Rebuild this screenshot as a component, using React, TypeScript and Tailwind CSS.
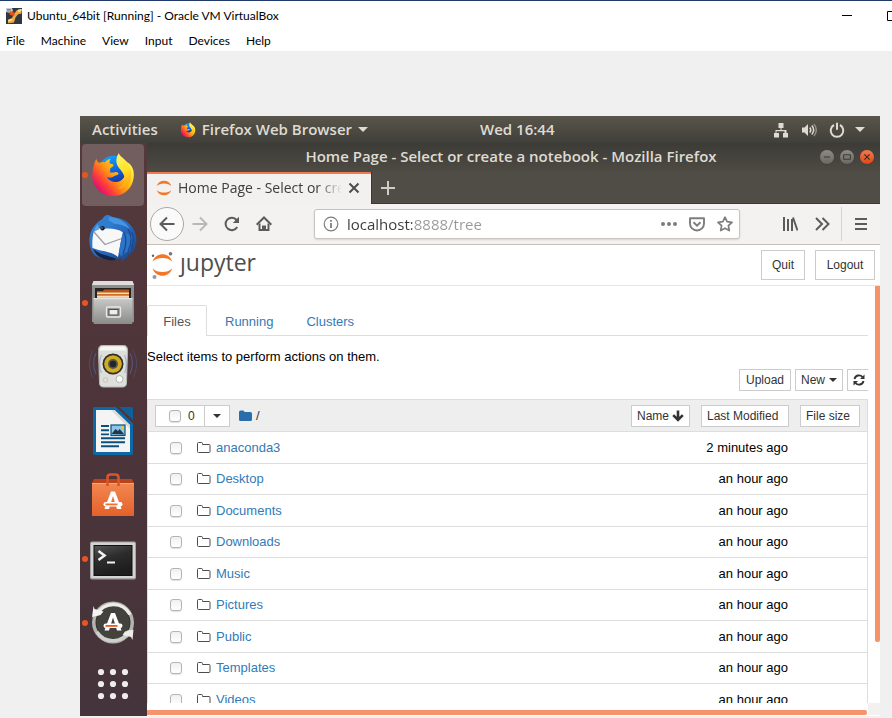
import { useId, useState } from "react";
import type { ReactNode } from "react";

const UI = "font-['Open_Sans','Noto_Sans',sans-serif]";
const HOST = "font-['Lato','Open_Sans',sans-serif] text-xs text-black";
const BTN =
  "flex items-center border border-[#ccc] bg-white text-xs text-[#333] whitespace-nowrap";
const CHECK =
  "block size-3 shrink-0 appearance-none rounded-[3px] border border-[#b4b4b4] bg-linear-to-b from-[#f0f0f0] to-white shadow-[0_1px_1px_rgba(0,0,0,0.12)] checked:bg-[#f07746]";

const files = [
  ["anaconda3", "2 minutes ago"],
  ["Desktop", "an hour ago"],
  ["Documents", "an hour ago"],
  ["Downloads", "an hour ago"],
  ["Music", "an hour ago"],
  ["Pictures", "an hour ago"],
  ["Public", "an hour ago"],
  ["Templates", "an hour ago"],
  ["Videos", "an hour ago"],
];

/* ---------- application icons ---------- */

function VirtualBoxIcon() {
  return (
    <svg viewBox="0 0 16 16" className="size-4 shrink-0">
      <rect width="16" height="16" fill="#2f3742" />
      <path d="M0 0h6l1 3-3 2-4-1z" fill="#c9ccd2" />
      <path d="M1 1.500h4M1 3h4" stroke="#5a6270" strokeWidth=".7" />
      <path d="M8 6l3-4 4.500-1v4.500l-3.500.8-2.500 3.200L8 14.500l-6 .8v-3.500l4-1.800z" fill="#f3a83c" />
      <path d="M3 4.500l3.500-1.500 2.500 2.500L8 8 4 7z" fill="#e8521c" />
      <path d="M12 1.700l3.500-.7v2l-3 1zM2 12l3.500-1 1.500 1-4.500 1.500z" fill="#fde29a" />
    </svg>
  );
}

function FirefoxIcon({ className }: { className: string }) {
  const id = useId();
  return (
    <svg viewBox="0 0 48 48" className={className}>
      <defs>
        <linearGradient id={id + "a"} x1="0.85" y1="0.15" x2="0.1" y2="0.75">
          <stop offset="0" stopColor="#fff04a" />
          <stop offset="0.3" stopColor="#ffc21a" />
          <stop offset="0.55" stopColor="#ff8a16" />
          <stop offset="0.8" stopColor="#ff3b3c" />
          <stop offset="1" stopColor="#e0146e" />
        </linearGradient>
        <linearGradient id={id + "b"} x1="0.3" y1="0" x2="0.6" y2="1">
          <stop offset="0" stopColor="#19a2fa" />
          <stop offset="0.5" stopColor="#0a62dd" />
          <stop offset="1" stopColor="#261d80" />
        </linearGradient>
        <linearGradient id={id + "c"} x1="0.4" y1="0" x2="0.6" y2="1">
          <stop offset="0" stopColor="#fff36a" />
          <stop offset="0.5" stopColor="#ffe226" />
          <stop offset="1" stopColor="#ff9f10" />
        </linearGradient>
      </defs>
      <circle cx="25" cy="21" r="17" fill={`url(#${id}b)`} />
      <path
        d="M6.500 7c.5 2 1.500 3.500 3 4.500 2-1 4-1.300 6-.8 1.500-2 3.500-3 6-3.300-1.300 1.600-1.500 3.500-.8 4.600 1.300.5 3.300.5 3.800 1.500.2 1.500-2.500 2.500-3.500 4 0 1.500.2 2.500-.5 3.500 2 .5 3.500.5 5.500 0 2.500-.5 4.500 1 3.500 2.300-1.500 1.200-3.500 1.200-5 2.200-2 1.500-5 1.500-7 .5 2.500 4 7 6 11.500 5 5.500-1.200 8.500-6 8-12-.3-4-3.500-8.500-4.500-12L41 12c4 4 5.500 9 4.500 15.500C44 38.500 35 46 24.500 46 12 46 2.500 36.500 2.500 25 2.500 18 4 12 6.500 7z"
        fill={`url(#${id}a)`}
      />
      <path
        d="M30 1c.5 3 5 5 8.500 9.500 5 6.500 6 14 2.500 21-3 5.500-8 7-12 6.500 7-2.500 9-8.500 6-14.500C32.500 18 28 16 27.500 10 27.300 6.500 28.500 3.500 30 1z"
        fill={`url(#${id}c)`}
      />
    </svg>
  );
}

function ThunderbirdIcon() {
  const id = useId();
  return (
    <svg viewBox="0 0 48 48" className="size-12">
      <defs>
        <linearGradient id={id} x1="0" y1="0" x2="1" y2="1">
          <stop offset="0" stopColor="#3a8ada" />
          <stop offset="0.5" stopColor="#2a6cc0" />
          <stop offset="1" stopColor="#173f80" />
        </linearGradient>
      </defs>
      <path d="M18 0c3 0 5 2 8 2.500 12 1 21 10 21.500 22.500-.3 8-4.500 13-7.500 16l1-4c-2 4-5 8-9 9.500l1-4-7 2.500C14 44 7 43 4 38 1 34 0 29 .5 23c1-9 6-15 13-19 1-2 2.500-3.500 4.500-4z" fill={`url(#${id})`} />
      <path d="M20 2c9 0 17 5 21 12-7-5-15-6-22-5z" fill="#4596e0" />
      <path d="M4 33c4 6 16 8 24 11l-4 1.500C14 45 6 41 4 33z" fill="#14254a" />
      <path d="M5 16c3-1 5-1.500 6-3l8 .5c6 0 11 1 15 4-2 6-3 14-5 24.500C22 36 12 36.500 3.500 33 3 28 3.500 21 5 16z" fill="#f8f8f9" />
      <path d="M5 17l11 12.500L34 23" fill="none" stroke="#9a9ea6" strokeWidth="1.300" />
      <path d="M34 17c-2 8-3 14-4 21l2 3 9-6 3-14z" fill="#2c74c8" />
      <path d="M39 14c4 6 4 14 0 22M35 17c3 7 2 15-1 22M43 17c2 5 1.500 12-1 17" stroke="#1a4992" strokeWidth="1.300" fill="none" />
      <path d="M9 8c4-4 12-4 16 1-3 3-8 5-13 5z" fill="#2f7dce" />
      <circle cx="13.500" cy="13.300" r="2.200" fill="#14213d" />
      <circle cx="13" cy="13" r=".7" fill="#c8963c" />
      <path d="M9 9c-2 2-4 5-4 8l5-3z" fill="#58a4e4" />
    </svg>
  );
}

function DrawerIcon() {
  const id = useId();
  return (
    <svg viewBox="0 0 48 48" className="size-12">
      <defs>
        <linearGradient id={id} x1="0" y1="0" x2="0" y2="1">
          <stop offset="0" stopColor="#c9c9c7" />
          <stop offset="1" stopColor="#8b8b89" />
        </linearGradient>
      </defs>
      <path d="M4.500 2h39l1.500 4v37H3V6z" fill="#8f8f8d" />
      <path d="M4.500 2h39L45 6H3z" fill="#dededc" />
      <rect x="6" y="9" width="36" height="13" fill="#272322" />
      <path d="M8 12h6l1-1.500h25V20H8z" fill="#b5561c" />
      <path d="M8 13.500h32V15H8z" fill="#ffd9a6" />
      <path d="M8 15.500h32V20H8z" fill="#e8863b" />
      <path d="M8 17.200h32v1.400H8z" fill="#fff2dc" />
      <rect x="4.500" y="19" width="39" height="26" rx="1" fill={`url(#${id})`} />
      <path d="M4.500 19.700h39" stroke="#e9e9e7" />
      <rect x="17.500" y="28" width="14" height="10" rx="1" fill="#9a9a98" stroke="#e9e9e7" strokeWidth="1.300" />
      <rect x="20" y="30.500" width="9" height="5.500" fill="#eceeea" stroke="#4b4b49" />
    </svg>
  );
}

function RhythmboxIcon() {
  return (
    <svg viewBox="0 0 48 48" className="size-12">
      <g fill="none" stroke="#5570a5" strokeWidth="1.100">
        <path d="M7 10c-3 6-3 14 0 21M41 10c3 6 3 14 0 21" opacity=".6" />
        <path d="M4 7.500c-5 8-4.500 19 0 27M44 7.500c5 8 4.500 19 0 27" opacity=".35" />
      </g>
      <path d="M13.500 2.500h21c3 0 4 2 4 5L37.500 40c-.2 3-1.500 4-4 4h-19c-2.500 0-3.800-1-4-4L9.500 7.500c0-3 1-5 4-5z" fill="#dededb" stroke="#b9b9b5" />
      <path d="M14 3.500h20c2 0 3 1.500 3 4H11c0-2.500 1-4 3-4z" fill="#f6f6f4" />
      <g fill="none" stroke="#7f97c8" strokeWidth="1.100" opacity=".6">
        <path d="M12.500 12c-2.500 5-2.500 13 0 18M35.500 12c2.500 5 2.500 13 0 18" />
      </g>
      <circle cx="24" cy="21" r="10.500" fill="#55523e" />
      <circle cx="24" cy="21" r="8.800" fill="#d0ac22" />
      <circle cx="24" cy="21" r="5" fill="#5b5648" />
      <circle cx="24" cy="21" r="3.200" fill="#22252c" />
      <circle cx="24" cy="21" r="9.700" fill="none" stroke="#2f2e2b" strokeWidth="1.200" />
      <circle cx="16.500" cy="37" r="2.300" fill="none" stroke="#c5c5c1" />
      <circle cx="30.500" cy="36" r="3.500" fill="#fbfbfa" stroke="#b5b5b1" />
    </svg>
  );
}

function WriterIcon() {
  return (
    <svg viewBox="0 0 48 48" className="size-12">
      <path d="M30 0h12c1.500 0 2 .5 2 2v11z" fill="#0f5f9a" />
      <path d="M6 0h21l17 16.500V46c0 1.500-.8 2-2 2H6c-1.500 0-2-.8-2-2V2c0-1.500.8-2 2-2z" fill="#0b6aa5" />
      <path d="M7 3h18.500L41 18v27H7z" fill="#f4f4f4" />
      <path d="M25.500 3L41 18v4L22 3z" fill="#dadada" />
      <g stroke="#0b4f7d" strokeWidth="1.900">
        <path d="M12 19h8M12 23.200h8M12 27.400h8M12 31.200h24M12 35.200h24M12 39.200h18" />
      </g>
      <rect x="22" y="18" width="14" height="10.500" fill="#8dc6ea" stroke="#0b4f7d" strokeWidth="1.200" />
      <path d="M22.500 27l4-5 2.500 2 1.500-2 5 5.500z" fill="#1d3a4a" />
      <circle cx="33.300" cy="20.500" r="1.500" fill="#e8c63c" />
    </svg>
  );
}

function StoreLetter({ bar }: { bar: string }) {
  return (
    <g>
      <path d="M22 18h4l5.500 14.500 1 3h-4.500L24 22.500 20 35.500h-4.500l1-3z" fill="#fff" />
      <rect x="14.500" y="28.500" width="19" height="4.500" rx="2.200" fill="#fff" />
      <rect x="16.500" y="30" width="12" height="1.800" fill={bar} />
    </g>
  );
}

function SoftwareIcon() {
  const id = useId();
  return (
    <svg viewBox="0 0 48 48" className="size-12">
      <defs>
        <linearGradient id={id} x1="0" y1="0" x2="0" y2="1">
          <stop offset="0" stopColor="#f28751" />
          <stop offset="1" stopColor="#e4612a" />
        </linearGradient>
      </defs>
      <path d="M5 8h38l2 4H3z" fill="#b8441c" />
      <path d="M3 12h42v33H3z" fill={`url(#${id})`} />
      <path d="M3 12.500h42" stroke="#f7a77d" />
      <path d="M18.500 15V6.500c0-2 .8-3 3-3h5c2.200 0 3 1 3 3V15" fill="none" stroke="#d9562a" strokeWidth="2.600" />
      <g transform="translate(0 2.500)">
        <StoreLetter bar="#ec7038" />
      </g>
    </svg>
  );
}

function TerminalIcon() {
  const id = useId();
  return (
    <svg viewBox="0 0 48 48" className="size-12">
      <defs>
        <linearGradient id={id} x1="0" y1="0" x2="0.4" y2="1">
          <stop offset="0" stopColor="#565656" />
          <stop offset="0.5" stopColor="#2c2c2c" />
          <stop offset="1" stopColor="#1d1d1d" />
        </linearGradient>
      </defs>
      <rect x="1" y="6.500" width="46" height="38" rx="2" fill="#a4a4a2" />
      <rect x="2" y="7.500" width="44" height="35.500" rx="1" fill="#d3d3d1" />
      <rect x="5" y="10.500" width="38" height="30" fill={`url(#${id})`} stroke="#111" />
      <path d="M9.500 16l6 4.500-6 4.500" fill="none" stroke="#f2f2f2" strokeWidth="2.600" />
      <path d="M18 27.500h8" stroke="#f2f2f2" strokeWidth="2" />
    </svg>
  );
}

function UpdaterIcon() {
  return (
    <svg viewBox="0 0 48 48" className="size-12">
      <circle cx="24" cy="23.500" r="21" fill="#b3b3b0" />
      <circle cx="24" cy="23.500" r="17" fill="#43423d" stroke="#2e2d2a" />
      <path d="M7.500 16A18.800 18.800 0 0 1 41 15.500" fill="none" stroke="#ecece9" strokeWidth="3.400" />
      <path d="M40.500 31.500A18.800 18.800 0 0 1 8 33" fill="none" stroke="#cfcfcc" strokeWidth="3.400" />
      <path d="M4.500 7l1 3 9 2.500-3 3.500-8.500 2z" fill="#f3f3f1" />
      <path d="M43.500 41l-1.500-3-8.500-2 2.500-3.500 8.500-2z" fill="#ecece9" />
      <g transform="translate(0 -4)">
        <StoreLetter bar="#f0561d" />
      </g>
    </svg>
  );
}

function AppsGridIcon() {
  return (
    <svg viewBox="0 0 48 48" className="size-12" fill="#efedec">
      {[12, 24, 36].map((x) =>
        [9, 21, 33].map((y) => <circle key={x + "-" + y} cx={x} cy={y} r="3.100" />),
      )}
    </svg>
  );
}

/* ---------- small glyphs ---------- */

function Glyph({
  children,
  className = "size-4",
  box = "0 0 16 16",
  width = 2,
}: {
  children: ReactNode;
  className?: string;
  box?: string;
  width?: number;
}) {
  return (
    <svg
      viewBox={box}
      className={"shrink-0 " + className}
      fill="none"
      stroke="currentColor"
      strokeWidth={width}
    >
      {children}
    </svg>
  );
}

function Caret({ className }: { className: string }) {
  return (
    <svg viewBox="0 0 8 4" className={"shrink-0 " + className} fill="currentColor">
      <path d="M0 0h8L4 4z" />
    </svg>
  );
}

function Swooshes({ className }: { className: string }) {
  return (
    <svg viewBox="0 0 16 16" className={className} fill="#f37726">
      <path d="M.5 6C2 2.500 4.700 .8 8 .8S14 2.500 15.500 6C13.500 4.200 11 3.400 8 3.400S2.500 4.200.5 6z" />
      <path d="M.5 10c1.500 3.500 4.200 5.200 7.500 5.200s6-1.700 7.500-5.200c-2 1.800-4.500 2.600-7.500 2.600S2.500 11.800.5 10z" />
    </svg>
  );
}

function JupyterMark() {
  return (
    <svg viewBox="0 0 23 28" className="h-7 w-[23px] shrink-0">
      <path d="M1.500 10.500C3.500 5.500 7.300 3.300 11.500 3.300s8 2.200 9.700 7.200C18.500 8 15.300 7 11.500 7S4.200 8 1.500 10.500z" fill="#f37726" />
      <path d="M1.500 17.500c2 5 5.800 7.300 10 7.300s8-2.300 9.700-7.300C18.500 20 15.300 21 11.500 21S4.200 20 1.500 17.500z" fill="#f37726" />
      <circle cx="19.500" cy="2.700" r="1.800" fill="#767677" />
      <circle cx="2" cy="4.800" r="1.200" fill="#616262" />
      <circle cx="3.500" cy="26" r="2" fill="#989798" />
    </svg>
  );
}

/* ---------- desktop parts ---------- */

function DockItem({
  label,
  running,
  active,
  children,
}: {
  label: string;
  running?: boolean;
  active?: boolean;
  children: ReactNode;
}) {
  return (
    <button
      aria-label={label}
      className={
        "relative flex h-[62px] w-[62px] shrink-0 items-center justify-center rounded-sm " +
        (active ? "bg-[#725d5f]" : "")
      }
    >
      {running && (
        <span className="absolute top-1/2 left-0 size-1.5 -translate-y-1/2 rounded-full bg-[#e95420]" />
      )}
      {children}
    </button>
  );
}

function Dock() {
  return (
    <nav
      aria-label="Dock"
      className="flex w-[67px] shrink-0 flex-col gap-0.5 overflow-hidden bg-linear-to-b from-[#54393b] via-[#4c343a] to-[#45343b] pt-px pl-0.5"
    >
      <DockItem label="Firefox" running active>
        <FirefoxIcon className="size-[46px]" />
      </DockItem>
      <DockItem label="Thunderbird"><ThunderbirdIcon /></DockItem>
      <DockItem label="Files" running><DrawerIcon /></DockItem>
      <DockItem label="Rhythmbox"><RhythmboxIcon /></DockItem>
      <DockItem label="LibreOffice Writer"><WriterIcon /></DockItem>
      <DockItem label="Ubuntu Software"><SoftwareIcon /></DockItem>
      <DockItem label="Terminal" running><TerminalIcon /></DockItem>
      <DockItem label="Software Updater" running><UpdaterIcon /></DockItem>
      <DockItem label="Show Applications"><AppsGridIcon /></DockItem>
    </nav>
  );
}

function TopBar() {
  return (
    <div className="flex h-[27px] shrink-0 items-center bg-linear-to-b from-[#59554b] to-[#403f3a] text-[15px] font-semibold text-[#dfdbd2]">
      <div className="flex w-1/2 items-center pl-3">
        <button>Activities</button>
        <button className="ml-[22px] flex items-center gap-1.5">
          <FirefoxIcon className="size-4" />
          Firefox Web Browser
          <Caret className="h-[5px] w-2.5" />
        </button>
      </div>
      <button>Wed 16:44</button>
      <button aria-label="System menu" className="mr-[15px] ml-auto flex items-center">
        <svg viewBox="0 0 16 16" className="size-4" fill="currentColor">
          <path d="M5.500 1h5v5h-2v2h5v3h1.500v4.500h-5V11h1.500V9.200h-8V11H6v4.500H1V11h1.500V8h5V6h-2z" />
        </svg>
        <svg viewBox="0 0 16 16" className="ml-3 size-4" fill="currentColor">
          <path d="M1 5.500h2.500L7 2v12l-3.500-3.500H1z" />
          <g fill="none" stroke="currentColor" strokeWidth="1.500">
            <path d="M8.800 5.500c1.200 1.500 1.200 3.500 0 5" />
            <path d="M10.800 3.500c2.300 2.700 2.300 6.300 0 9" />
            <path d="M12.800 2c3.300 3.500 3.300 8.500 0 12" opacity=".45" />
          </g>
        </svg>
        <Glyph className="ml-3 size-4">
          <path d="M5 3A6.300 6.300 0 1 0 11 3M8 .8v7" />
        </Glyph>
        <Caret className="ml-2.5 h-[5px] w-2.5" />
      </button>
    </div>
  );
}

function WindowTitle() {
  const round =
    "flex size-4 items-center justify-center rounded-full border border-[#44423d] bg-linear-to-b from-[#8d8b84] to-[#6a6861] text-[#3a3935]";
  return (
    <div className="grid h-[29px] shrink-0 grid-cols-[1fr_auto_1fr] items-center bg-linear-to-b from-[#3c3b37] to-[#4e4b44] pr-[5px] pb-0.5 text-[15px] font-semibold text-[#dfdbd2]">
      <span />
      <h1 className="whitespace-nowrap">Home Page - Select or create a notebook - Mozilla Firefox</h1>
      <div className="flex justify-end gap-1">
        <button aria-label="Minimize" className={round}>
          <Glyph className="size-3" width={1.300}><path d="M4 8h8" /></Glyph>
        </button>
        <button aria-label="Maximize" className={round}>
          <Glyph className="size-3" width={1.300}><path d="M3.500 5h9v6h-9z" /></Glyph>
        </button>
        <button
          aria-label="Close"
          className="flex size-4 items-center justify-center rounded-full border border-[#44423d] bg-linear-to-b from-[#f5784c] to-[#dd4814] text-[#3a2a20]"
        >
          <Glyph className="size-3" width={1.500}><path d="M4.500 4.500l7 7M11.500 4.500l-7 7" /></Glyph>
        </button>
      </div>
    </div>
  );
}

function TabStrip() {
  return (
    <div className="flex h-8 shrink-0 items-stretch bg-[#504d46]">
      <div className="flex w-56 items-center border-t-2 border-[#f27a4f] bg-[#f2f1f0] pb-0.5 pl-[9px]">
        <Swooshes className="size-4 shrink-0" />
        <span className="ml-1.5 w-[164px] overflow-hidden mask-r-from-85% mask-r-to-100% text-sm whitespace-nowrap text-[#3d3d3d]">
          Home Page - Select or create a notebook
        </span>
        <button aria-label="Close tab" className="ml-1.5 text-[#4c4c4c]">
          <Glyph className="size-3" box="0 0 12 12"><path d="M1.500 1.500l9 9M10.500 1.500l-9 9" /></Glyph>
        </button>
      </div>
      <button
        aria-label="New tab"
        className="flex flex-1 items-center border-b border-l border-[#3a3833] pl-[9px] text-[#d0ccc4]"
      >
        <Glyph className="size-3.5" box="0 0 14 14"><path d="M7 0v14M0 7h14" /></Glyph>
      </button>
    </div>
  );
}

function NavBar() {
  const [url, setUrl] = useState("localhost:8888/tree");
  return (
    <div className="flex h-[41px] shrink-0 items-center border-b border-[#c6bfb8] bg-[#f3f2f1] pl-[3px] text-[#5b5b5b]">
      <button
        aria-label="Back"
        className="flex size-[34px] items-center justify-center rounded-full border border-[#aaa8a5] bg-[#fbfafa]"
      >
        <Glyph><path d="M15.500 8H1.500M8 1.500L1.500 8 8 14.500" /></Glyph>
      </button>
      <button aria-label="Forward" className="ml-2 text-[#b9b8b6]">
        <Glyph><path d="M.5 8h14M8 1.500L14.500 8 8 14.500" /></Glyph>
      </button>
      <button aria-label="Reload" className="ml-4">
        <Glyph>
          <path d="M13.200 11A6.200 6.200 0 1 1 12.600 4" />
          <path d="M15 .8V7H8.800z" fill="currentColor" stroke="none" />
        </Glyph>
      </button>
      <button aria-label="Home" className="ml-4">
        <Glyph>
          <path d="M.7 8.800L8 1.500l7.300 7.300" />
          <path d="M3.500 7.500V14h9V7.500" />
          <path d="M7 14v-3.500h2V14" />
        </Glyph>
      </button>
      <div className="ml-[42px] flex h-[30px] flex-1 items-center rounded-[3px] border border-[#c8c3be] bg-white pr-1.5 pl-2 text-[#7d7d7d] shadow-[0_1px_2px_rgba(0,0,0,0.12)]">
        <Glyph width={1.200}>
          <circle cx="8" cy="8" r="6.800" />
          <path d="M8 7v5M8 4v1.700" strokeWidth="1.800" />
        </Glyph>
        <input
          aria-label="Address"
          value={url}
          onChange={(e) => setUrl(e.target.value)}
          className="ml-2 min-w-0 flex-1 bg-[linear-gradient(90deg,#3a3a3a_65px,#989898_65px)] bg-clip-text text-[15px] text-transparent outline-none"
        />
        <button aria-label="Page actions">
          <svg viewBox="0 0 16 16" className="size-4" fill="currentColor">
            <circle cx="2" cy="8" r="2" /><circle cx="8" cy="8" r="2" /><circle cx="14" cy="8" r="2" />
          </svg>
        </button>
        <button aria-label="Save to Pocket" className="ml-3">
          <Glyph width={1.900}>
            <path d="M1 2.200h14v5.300a7 7 0 0 1-14 0z" strokeLinejoin="round" />
            <path d="M4.500 6.300L8 9.700l3.500-3.400" />
          </Glyph>
        </button>
        <button aria-label="Bookmark this page" className="ml-3">
          <Glyph width={1.700}>
            <path d="M8 1.200l2.100 4.500 4.900.6-3.600 3.400.9 4.900L8 12.200l-4.300 2.400.9-4.900L1 6.300l4.900-.6z" strokeLinejoin="round" />
          </Glyph>
        </button>
      </div>
      <button aria-label="Library" className="ml-[42px]">
        <Glyph><path d="M2 1v14M6 3v12M10 3v12" /><path d="M11 1.500L15.500 14.500" /></Glyph>
      </button>
      <button aria-label="More tools" className="ml-4">
        <Glyph><path d="M2 2l6 6-6 6M8.500 2l6 6-6 6" /></Glyph>
      </button>
      <div className="ml-[11px] flex h-[34px] items-center border-l border-[#d5d2ce] pr-3 pl-3">
        <button aria-label="Menu">
          <Glyph className="h-4 w-3.5" box="0 0 14 16"><path d="M1 3h12M1 8h12M1 13h12" /></Glyph>
        </button>
      </div>
    </div>
  );
}

/* ---------- notebook file browser ---------- */

function FolderOutline() {
  return (
    <svg viewBox="0 0 14 12" className="h-3 w-3.5 shrink-0" fill="none" stroke="#4d4d4d">
      <path d="M.5 1.500q0-1 1-1h3q1 0 1 1v1h6.500q1 0 1 1v6q0 1-1 1H1.500q-1 0-1-1z" />
    </svg>
  );
}

function FileTable() {
  return (
    <table className="w-full table-fixed border-separate border-spacing-0 border-l border-[#ddd] text-[13px] text-black">
      <colgroup>
        <col />
        <col className="w-[99px]" />
        <col className="w-[79px]" />
      </colgroup>
      <thead>
        <tr className="h-[33px] bg-[#eee]">
          <th className="border-y border-[#ddd] p-0 font-normal">
            <div className="flex items-center pl-[7px]">
              <label className={BTN + " h-[22px] w-[50px] pl-[13px]"}>
                <input type="checkbox" className={CHECK} />
                <span className="ml-[7px]">0</span>
              </label>
              <button aria-label="Select by type" className={BTN + " -ml-px h-[22px] w-[26px] justify-center"}>
                <Caret className="h-1 w-2" />
              </button>
              <a href="#root" aria-label="Root folder" className="ml-[9px]">
                <svg viewBox="0 0 14 12" className="h-3 w-3.5" fill="#296eaa">
                  <path d="M0 2Q0 .5 1.500.5H4Q5.500.5 5.500 2H11.500Q13 2 13 3.500V9.500Q13 11 11.500 11H1.500Q0 11 0 9.500z" />
                </svg>
              </a>
              <span className="ml-[3px] text-[#333]">/</span>
              <button className={BTN + " ml-auto h-[22px] w-[59px] gap-[3px] pl-[5px]"}>
                Name
                <svg viewBox="0 0 12 12" className="size-3" fill="none" stroke="#333" strokeWidth="2.600">
                  <path d="M6 .5v9M1.200 5.200L6 10 10.800 5.200" />
                </svg>
              </button>
            </div>
          </th>
          <th className="border-y border-[#ddd] p-0 font-normal">
            <button className={BTN + " ml-[11px] h-[22px] w-[88px] pl-[5px]"}>Last Modified</button>
          </th>
          <th className="border-y border-r border-[#ddd] p-0 font-normal">
            <button className={BTN + " ml-[11px] h-[22px] w-[60px] pl-[5px]"}>File size</button>
          </th>
        </tr>
      </thead>
      <tbody>
        {files.map(([name, when]) => (
          <tr key={name} className="odd:h-8 even:h-[31px]">
            <td className="border-b border-[#ddd] p-0">
              <div className="flex items-center pl-[22px]">
                <input type="checkbox" aria-label={"Select " + name} className={CHECK} />
                <span className="ml-[15px]"><FolderOutline /></span>
                <a href="#root" className="ml-[5px] text-[#337ab7]">{name}</a>
              </div>
            </td>
            <td className="border-b border-[#ddd] p-0 pr-px text-right whitespace-nowrap">{when}</td>
            <td className="border-r border-b border-[#ddd] p-0" />
          </tr>
        ))}
      </tbody>
    </table>
  );
}

function Jupyter() {
  return (
    <div className="flex min-h-0 flex-1 flex-col bg-white font-['Liberation_Sans',Arial,sans-serif] text-[13px]">
      <header className="flex h-[41px] shrink-0 items-center border-b border-[#e7e7e7] pr-[5px] pl-1">
        <a href="#root" className={"flex items-center gap-1.5 text-[23px] leading-7 text-[#4e4e4e] " + UI}>
          <JupyterMark />
          <span className="-mt-1.5">ȷupyter</span>
        </a>
        <button className={BTN + " ml-auto h-[30px] w-11 justify-center"}>Quit</button>
        <button className={BTN + " ml-2.5 h-[30px] w-15 justify-center"}>Logout</button>
      </header>
      <div className="flex min-h-0 flex-1">
        <div className="flex min-w-0 flex-1 flex-col">
          <main className="min-h-0 flex-1 overflow-hidden">
            <div role="tablist" className="mt-[19px] flex border-b border-[#ddd]">
              <button role="tab" aria-selected="true" className="-mb-px h-[31px] w-15 rounded-t-xs border border-b-0 border-[#ddd] bg-white pt-px text-[#555]">
                Files
              </button>
              <button role="tab" className="-mb-px h-[31px] pt-0.5 pl-[18px] text-[#337ab7]">Running</button>
              <button role="tab" className="-mb-px h-[31px] pt-0.5 pl-[33px] text-[#337ab7]">Clusters</button>
            </div>
            <p className="h-[33px] pt-[11px] leading-5 text-black">Select items to perform actions on them.</p>
            <div className="mb-2 flex justify-end gap-1">
              <button className={BTN + " h-[22px] w-[52px] justify-center"}>Upload</button>
              <button className={BTN + " h-[22px] w-12 gap-1 pl-[5px]"}>
                New
                <Caret className="h-1 w-2" />
              </button>
              <button aria-label="Refresh" className={BTN + " h-[22px] w-[21px] border-r-0 pl-[5px]"}>
                <Glyph className="size-3" box="0 0 12 12" width={1.900}>
                  <path d="M1.500 5a4.600 4.600 0 0 1 8-2M10.500 7a4.600 4.600 0 0 1-8 2" />
                  <path d="M11.500.5v4.500H7zM.5 11.500V7H5z" fill="currentColor" stroke="none" />
                </Glyph>
              </button>
            </div>
            <FileTable />
          </main>
          <div className="h-[13px] shrink-0 pt-[7px] pr-px">
            <div className="h-[5px] rounded-r-xs bg-[#f6936b]" />
          </div>
        </div>
        <div className="flex w-3 shrink-0 flex-col items-end">
          <div className="min-h-0 w-[5px] flex-[356] rounded-b-xs bg-[#f6936b]" />
          <div className="flex-[61]" />
          <div className="mb-px h-3 w-full bg-[#f2f1f0]" />
        </div>
      </div>
    </div>
  );
}

export default function App() {
  return (
    <div className={"flex h-screen flex-col overflow-hidden bg-[#f0f0f0] " + UI}>
      <div className={"flex h-[31px] shrink-0 items-center border-t border-[#1f3a68] bg-white pl-1.5 " + HOST}>
        <VirtualBoxIcon />
        <span className="ml-[5px]">Ubuntu_64bit [Running] - Oracle VM VirtualBox</span>
        <button aria-label="Minimize window" className="ml-auto">
          <Glyph className="h-2.5 w-2.5" box="0 0 10 10" width={1}><path d="M0 4.500h10" /></Glyph>
        </button>
        <button aria-label="Maximize window" className="ml-[35px] w-[5px] overflow-hidden">
          <Glyph className="h-2.5 w-2.5" box="0 0 10 10" width={1}><path d="M.5.5h9v9h-9z" /></Glyph>
        </button>
      </div>
      <div role="menubar" className={"flex h-5 shrink-0 items-center gap-4 bg-white pl-1.5 " + HOST}>
        {["File", "Machine", "View", "Input", "Devices", "Help"].map((m) => (
          <button key={m} role="menuitem">{m}</button>
        ))}
      </div>
      <div className="flex min-h-0 flex-1 flex-col pt-[65px] pr-3 pb-0.5 pl-20">
        <TopBar />
        <div className="flex min-h-0 flex-1">
          <Dock />
          <div className="flex min-w-0 flex-1 flex-col">
            <WindowTitle />
            <TabStrip />
            <NavBar />
            <Jupyter />
          </div>
        </div>
      </div>
    </div>
  );
}
